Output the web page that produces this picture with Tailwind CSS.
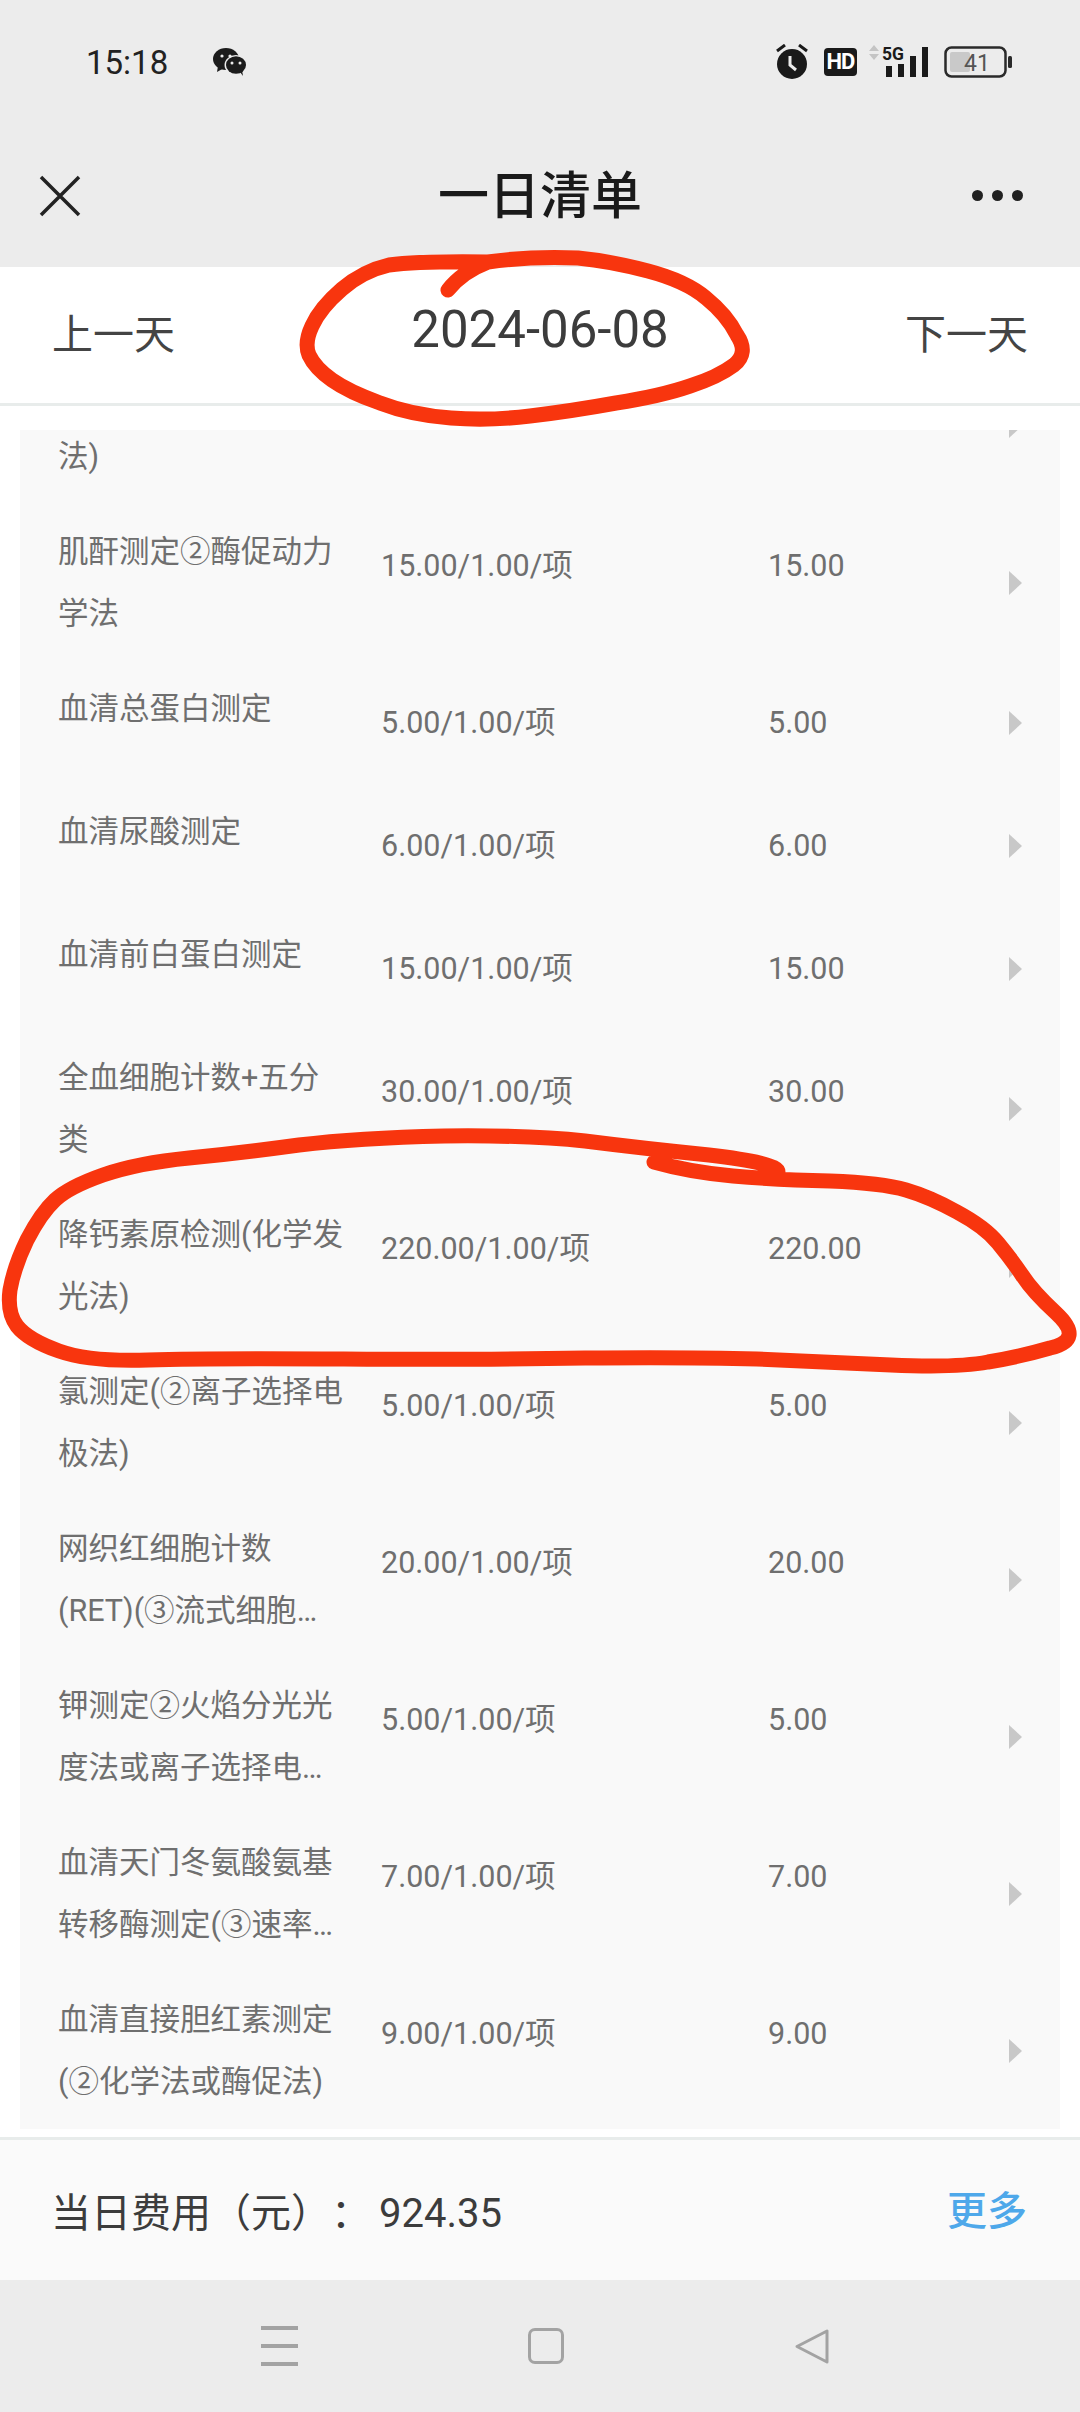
<!DOCTYPE html>
<html lang="zh-CN">
<head>
    <meta charset="UTF-8">
    <meta name="viewport" content="width=device-width, initial-scale=1.0">
    <title>一日清单</title>
    <script src="https://cdn.jsdelivr.net/npm/@tailwindcss/browser@4"></script>
</head>
<body class="relative w-[1080px] h-[2412px] overflow-hidden bg-white font-[Roboto,'Noto_Sans_CJK_SC',sans-serif]">

    <!-- Status bar + title -->
    <header class="bg-[#ececec] h-[267px]">
        <div class="flex items-center h-[124px] pl-[86px] pr-[67px]">
            <span class="text-[33px] text-[#222] leading-none">15:18</span>
            <svg class="ml-[45px]" width="34" height="28" viewBox="0 0 34 28">
                <ellipse cx="13" cy="11" rx="13" ry="11" fill="#1c1c1c"/>
                <path d="M5 18l-1 6 7-4z" fill="#1c1c1c"/>
                <ellipse cx="23" cy="17" rx="11.5" ry="10" fill="#ececec"/>
                <ellipse cx="23" cy="17" rx="10" ry="8.8" fill="#1c1c1c"/>
                <path d="M27 24l3 4-1-6z" fill="#1c1c1c"/>
                <circle cx="9" cy="8" r="1.6" fill="#ececec"/>
                <circle cx="17" cy="8" r="1.6" fill="#ececec"/>
                <circle cx="19" cy="15" r="1.5" fill="#ececec"/>
                <circle cx="27" cy="15" r="1.5" fill="#ececec"/>
            </svg>
            <div class="ml-auto flex items-center">
                <svg width="34" height="36" viewBox="0 0 34 36">
                    <circle cx="17" cy="20" r="15" fill="#1a1a1a"/>
                    <path d="M2 7l8-6M32 7l-8-6" stroke="#1a1a1a" stroke-width="3" fill="none"/>
                    <path d="M15 12v9l6 5" stroke="#ececec" stroke-width="3" fill="none"/>
                </svg>
                <div class="ml-[15px] w-[33px] h-[28px] rounded-[4px] bg-[#1a1a1a] text-white text-[22px] font-bold leading-[28px] text-center tracking-[-1px]">HD</div>
                <svg class="ml-[11px]" width="62" height="34" viewBox="0 0 62 34">
                    <path d="M6 0l5 6H1zM6 15l5-6H1z" fill="#c4c4c4"/>
                    <text x="14" y="15" font-size="18" font-weight="700" fill="#1a1a1a" textLength="22" lengthAdjust="spacingAndGlyphs">5G</text>
                    <rect x="18" y="21" width="6" height="11" fill="#1a1a1a"/>
                    <rect x="30" y="19" width="6" height="13" fill="#1a1a1a"/>
                    <rect x="42" y="11" width="6" height="21" fill="#1a1a1a"/>
                    <rect x="54" y="2" width="6" height="30" fill="#1a1a1a"/>
                </svg>
                <svg class="ml-[14px]" width="69" height="32" viewBox="0 0 69 32">
                    <rect x="1.500" y="1.500" width="60" height="29" rx="6" fill="none" stroke="#2a2a2a" stroke-width="2.500"/>
                    <rect x="6" y="6" width="20" height="20" rx="2" fill="#c9c9c9"/>
                    <rect x="64" y="10" width="4" height="12" rx="1.500" fill="#2a2a2a"/>
                    <text x="20" y="25" font-size="23" fill="#555">41</text>
                </svg>
            </div>
        </div>
        <div class="grid grid-cols-[1fr_auto_1fr] items-center h-[143px] px-[39px]">
            <svg width="42" height="42" viewBox="0 0 42 42">
                <path d="M2 2l38 38M40 2L2 40" stroke="#222" stroke-width="3.500" fill="none"/>
            </svg>
            <h1 class="text-[51px] font-medium leading-none text-[#1a1a1a] pt-[2px]">一日清单</h1>
            <div class="flex justify-end gap-[9px] pr-[18px]">
                <span class="w-[11px] h-[11px] rounded-full bg-[#222]"></span>
                <span class="w-[11px] h-[11px] rounded-full bg-[#222]"></span>
                <span class="w-[11px] h-[11px] rounded-full bg-[#222]"></span>
            </div>
        </div>
    </header>

    <!-- Date switcher -->
    <nav class="flex items-center justify-between h-[139px] pl-[52px] pr-[52px] border-b-[3px] border-[#e8eceb] text-[41px] text-[#444]">
        <span class="pt-[2px]">上一天</span>
        <span class="text-[51px] text-[#3c3c3c] mb-[10px]">2024-06-08</span>
        <span class="pt-[2px]">下一天</span>
    </nav>

    <!-- Item list -->
    <main class="h-[1731px] px-[20px] pt-[24px]">
        <div class="h-[1699px] overflow-hidden bg-[#f9f9f9] text-[30.5px] leading-[62px] text-[#6f6f6f]">
            <div class="-mt-[82px]">

                <div class="flex items-start min-h-[123px] pt-[16px] pb-[17px] pl-[38px]">
                    <div class="w-[288px] line-clamp-2">&nbsp;<br>法)</div>
                    <div class="w-[387px] ml-[35px] mt-[14px]"></div>
                    <div class="w-[241px] mt-[14px]"></div>
                    <div class="self-center w-0 h-0 border-y-[12.5px] border-y-transparent border-l-[13px] border-l-[#c8c8c8]"></div>
                </div>

                <div class="flex items-start min-h-[123px] pt-[16px] pb-[17px] pl-[38px]">
                    <div class="w-[288px] line-clamp-2">肌酐测定②酶促动力学法</div>
                    <div class="w-[387px] ml-[35px] mt-[14px]">15.00/1.00/项</div>
                    <div class="w-[241px] mt-[14px]">15.00</div>
                    <div class="self-center w-0 h-0 border-y-[12.5px] border-y-transparent border-l-[13px] border-l-[#c8c8c8]"></div>
                </div>

                <div class="flex items-start min-h-[123px] pt-[16px] pb-[17px] pl-[38px]">
                    <div class="w-[288px] line-clamp-2">血清总蛋白测定</div>
                    <div class="w-[387px] ml-[35px] mt-[14px]">5.00/1.00/项</div>
                    <div class="w-[241px] mt-[14px]">5.00</div>
                    <div class="self-center w-0 h-0 border-y-[12.5px] border-y-transparent border-l-[13px] border-l-[#c8c8c8]"></div>
                </div>

                <div class="flex items-start min-h-[123px] pt-[16px] pb-[17px] pl-[38px]">
                    <div class="w-[288px] line-clamp-2">血清尿酸测定</div>
                    <div class="w-[387px] ml-[35px] mt-[14px]">6.00/1.00/项</div>
                    <div class="w-[241px] mt-[14px]">6.00</div>
                    <div class="self-center w-0 h-0 border-y-[12.5px] border-y-transparent border-l-[13px] border-l-[#c8c8c8]"></div>
                </div>

                <div class="flex items-start min-h-[123px] pt-[16px] pb-[17px] pl-[38px]">
                    <div class="w-[288px] line-clamp-2">血清前白蛋白测定</div>
                    <div class="w-[387px] ml-[35px] mt-[14px]">15.00/1.00/项</div>
                    <div class="w-[241px] mt-[14px]">15.00</div>
                    <div class="self-center w-0 h-0 border-y-[12.5px] border-y-transparent border-l-[13px] border-l-[#c8c8c8]"></div>
                </div>

                <div class="flex items-start min-h-[123px] pt-[16px] pb-[17px] pl-[38px]">
                    <div class="w-[288px] line-clamp-2">全血细胞计数+五分类</div>
                    <div class="w-[387px] ml-[35px] mt-[14px]">30.00/1.00/项</div>
                    <div class="w-[241px] mt-[14px]">30.00</div>
                    <div class="self-center w-0 h-0 border-y-[12.5px] border-y-transparent border-l-[13px] border-l-[#c8c8c8]"></div>
                </div>

                <div class="flex items-start min-h-[123px] pt-[16px] pb-[17px] pl-[38px]">
                    <div class="w-[288px] line-clamp-2">降钙素原检测(化学发光法)</div>
                    <div class="w-[387px] ml-[35px] mt-[14px]">220.00/1.00/项</div>
                    <div class="w-[241px] mt-[14px]">220.00</div>
                    <div class="self-center w-0 h-0 border-y-[12.5px] border-y-transparent border-l-[13px] border-l-[#c8c8c8]"></div>
                </div>

                <div class="flex items-start min-h-[123px] pt-[16px] pb-[17px] pl-[38px]">
                    <div class="w-[288px] line-clamp-2">氯测定(②离子选择电极法)</div>
                    <div class="w-[387px] ml-[35px] mt-[14px]">5.00/1.00/项</div>
                    <div class="w-[241px] mt-[14px]">5.00</div>
                    <div class="self-center w-0 h-0 border-y-[12.5px] border-y-transparent border-l-[13px] border-l-[#c8c8c8]"></div>
                </div>

                <div class="flex items-start min-h-[123px] pt-[16px] pb-[17px] pl-[38px]">
                    <div class="w-[288px] line-clamp-2">网织红细胞计数(RET)(③流式细胞仪法)</div>
                    <div class="w-[387px] ml-[35px] mt-[14px]">20.00/1.00/项</div>
                    <div class="w-[241px] mt-[14px]">20.00</div>
                    <div class="self-center w-0 h-0 border-y-[12.5px] border-y-transparent border-l-[13px] border-l-[#c8c8c8]"></div>
                </div>

                <div class="flex items-start min-h-[123px] pt-[16px] pb-[17px] pl-[38px]">
                    <div class="w-[288px] line-clamp-2">钾测定②火焰分光光度法或离子选择电极法</div>
                    <div class="w-[387px] ml-[35px] mt-[14px]">5.00/1.00/项</div>
                    <div class="w-[241px] mt-[14px]">5.00</div>
                    <div class="self-center w-0 h-0 border-y-[12.5px] border-y-transparent border-l-[13px] border-l-[#c8c8c8]"></div>
                </div>

                <div class="flex items-start min-h-[123px] pt-[16px] pb-[17px] pl-[38px]">
                    <div class="w-[288px] line-clamp-2">血清天门冬氨酸氨基转移酶测定(③速率法)</div>
                    <div class="w-[387px] ml-[35px] mt-[14px]">7.00/1.00/项</div>
                    <div class="w-[241px] mt-[14px]">7.00</div>
                    <div class="self-center w-0 h-0 border-y-[12.5px] border-y-transparent border-l-[13px] border-l-[#c8c8c8]"></div>
                </div>

                <div class="flex items-start min-h-[123px] pt-[16px] pb-[17px] pl-[38px]">
                    <div class="w-[288px] line-clamp-2">血清直接胆红素测定(②化学法或酶促法)</div>
                    <div class="w-[387px] ml-[35px] mt-[14px]">9.00/1.00/项</div>
                    <div class="w-[241px] mt-[14px]">9.00</div>
                    <div class="self-center w-0 h-0 border-y-[12.5px] border-y-transparent border-l-[13px] border-l-[#c8c8c8]"></div>
                </div>

            </div>
        </div>
    </main>

    <!-- Day total -->
    <footer class="flex items-center justify-between h-[143px] pl-[51px] pr-[53px] bg-[#fafafa] border-t-[3px] border-[#e8eceb] text-[40px] text-[#3c3c3c]">
        <div class="pt-[3px] [text-spacing-trim:space-all]">当日费用（元）<span class="font-['Noto_Sans_CJK_TC']">：</span><span class="ml-[8px]">924.35</span></div>
        <a class="font-medium text-[#4ea8ea] pt-[3px]">更多</a>
    </footer>

    <!-- System nav -->
    <div class="flex items-center h-[132px] pl-[261px] gap-[230px] bg-[#ececec]">
        <div class="flex flex-col gap-[14px] w-[37px]">
            <span class="h-[4px] bg-[#a3a3a3]"></span>
            <span class="h-[4px] bg-[#a3a3a3]"></span>
            <span class="h-[4px] bg-[#a3a3a3]"></span>
        </div>
        <div class="w-[36px] h-[36px] rounded-[7px] border-[3px] border-[#a3a3a3]"></div>
        <svg width="36" height="37" viewBox="0 0 36 37">
            <path d="M33 3v31L3 18.500z" fill="none" stroke="#a3a3a3" stroke-width="3" stroke-linejoin="round"/>
        </svg>
    </div>

    <!-- Red marker annotations drawn over the screenshot -->
    <svg class="absolute top-0 left-0 pointer-events-none" width="1080" height="2412" viewBox="0 0 1080 2412">
        <g fill="none" stroke="#f8350e" stroke-width="15" stroke-linecap="round" stroke-linejoin="round">
            <path d="M448 290Q462 272 488 262Q530 256 578 258Q610 261 648 271Q686 281 706 298Q727 315 737 335Q749 353 734 365Q718 377 690 386Q661 396 616 403Q572 411 530 416Q489 421 451 418Q411 415 380 403Q349 392 332 380Q315 368 309 355Q304 343 312 326Q320 308 342 289Q363 271 389 265Q420 261 488 262"/>
            <path d="M654 1162Q689 1172 733 1176Q778 1180 830 1181Q882 1183 906 1190Q930 1197 957 1212Q985 1227 998 1243Q1012 1260 1022 1275Q1033 1292 1056 1313Q1085 1340 1050 1348Q1019 1357 988 1362Q957 1368 891 1365Q826 1362 757 1359Q689 1357 585 1358Q482 1360 344 1359Q207 1358 148 1360Q90 1362 59 1351Q28 1340 17 1326Q7 1313 10 1290Q14 1267 27 1240Q41 1213 55 1200Q69 1187 103 1175Q138 1163 189 1158Q241 1153 299 1145Q358 1138 444 1136Q530 1135 585 1141Q640 1148 709 1155Q778 1163 778 1172"/>
        </g>
    </svg>

</body>
</html>
